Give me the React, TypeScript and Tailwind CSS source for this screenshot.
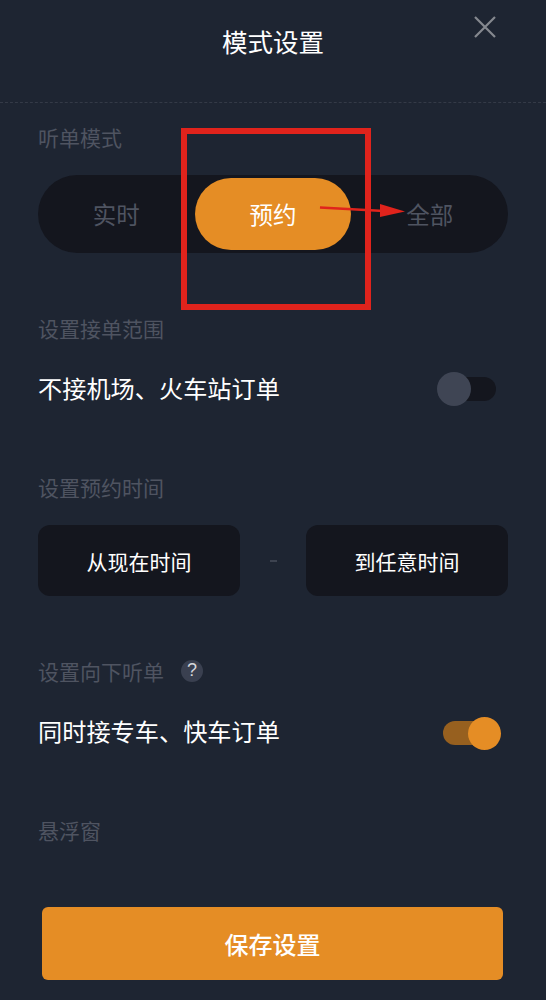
import { FC } from "react";

const cjk = "font-['Noto_Sans_CJK_SC','Noto_Sans',sans-serif]";

const Label: FC<{ text: string; className?: string }> = ({ text, className = "" }) => (
  <div className={`h-[30px] leading-[26px] text-[21px] text-[#4f5461] ${className}`}>{text}</div>
);

const App: FC = () => {
  return (
    <div className={`relative w-[546px] h-[1000px] overflow-hidden bg-[#1e2532] ${cjk}`}>
      {/* header */}
      <div className="relative h-[103px] pt-[24px] border-b border-dashed border-[#343a47] text-center">
        <h1 className="h-[36px] leading-[33px] text-[25.5px] text-white">模式设置</h1>
        <button className="absolute right-[49px] top-[15px] text-[#85888f]">
          <svg width="24" height="24" viewBox="0 0 24 24" fill="none" stroke="currentColor" strokeWidth="2.2">
            <path d="M2 2 L22 22 M22 2 L2 22" />
          </svg>
        </button>
      </div>

      <div className="px-[38px]">
        <Label text="听单模式" className="mt-[21px]" />
        <div className="mt-[21px] h-[78px] rounded-full bg-[#14161e] grid grid-cols-3 items-center text-center text-[23.5px] text-[#4f5461]">
          <span className="pt-[1px]">实时</span>
          <div className="h-[72px] leading-[72px] rounded-full bg-[#e58d25] text-white">预约</div>
          <span className="pt-[1px]">全部</span>
        </div>

        <Label text="设置接单范围" className="mt-[62px]" />
        <div className="mt-[25px] h-[40px] flex items-center justify-between text-[24.2px] text-white">
          <span className="pb-[4px]">不接机场、火车站订单</span>
          <div className="relative mr-[12px] w-[59px] h-[24px] -mt-[2px]">
            <div className="absolute left-[12px] right-0 top-0 h-[24px] rounded-full bg-[#14161e]" />
            <div className="absolute left-0 top-[-5px] w-[34px] h-[34px] rounded-full bg-[#3f4554]" />
          </div>
        </div>

        <Label text="设置预约时间" className="mt-[64px]" />
        <div className="mt-[21px] flex items-center justify-between text-[21px] text-white">
          <div className="w-[202px] h-[71px] leading-[72px] rounded-[12px] bg-[#14161e] text-center">从现在时间</div>
          <div className="w-[7px] h-[2px] bg-[#3d4350]" />
          <div className="w-[202px] h-[71px] leading-[72px] rounded-[12px] bg-[#14161e] text-center">到任意时间</div>
        </div>

        <div className="mt-[62px] flex items-center gap-[17px]">
          <Label text="设置向下听单" />
          <div className="w-[22px] h-[22px] -mt-[4px] rounded-full bg-[#3a4050] text-center leading-[21px] text-[18px] text-[#d5d7dc] font-['Liberation_Sans',sans-serif]">
            ?
          </div>
        </div>
        <div className="mt-[25px] h-[40px] flex items-center justify-between text-[24.2px] text-white">
          <span className="pb-[4px]">同时接专车、快车订单</span>
          <div className="relative mr-[7px] w-[58px] h-[24px] -mt-[1px]">
            <div className="absolute left-0 right-[8px] top-0 h-[24px] rounded-full bg-[#97601f]" />
            <div className="absolute right-0 top-[-4px] w-[33px] h-[33px] rounded-full bg-[#e58d25]" />
          </div>
        </div>

        <Label text="悬浮窗" className="mt-[64px]" />
        <button className="mt-[60px] ml-[4px] block w-[461px] h-[73px] leading-[71px] rounded-[6px] bg-[#e58d25] text-[24px] font-medium text-white">
          保存设置
        </button>
      </div>

      {/* red annotation on top of the screenshot */}
      <div className="absolute left-[181px] top-[128px] w-[190px] h-[182px] border-[6px] border-[#e0231c]" />
      <svg className="absolute left-0 top-0" width="546" height="320" fill="none">
        <path d="M320 207.500 L384 211" stroke="#e0231c" strokeWidth="2.500" />
        <path d="M380 204 L405 211.500 L380 217 Z" fill="#e0231c" />
      </svg>
    </div>
  );
};

export default App;
